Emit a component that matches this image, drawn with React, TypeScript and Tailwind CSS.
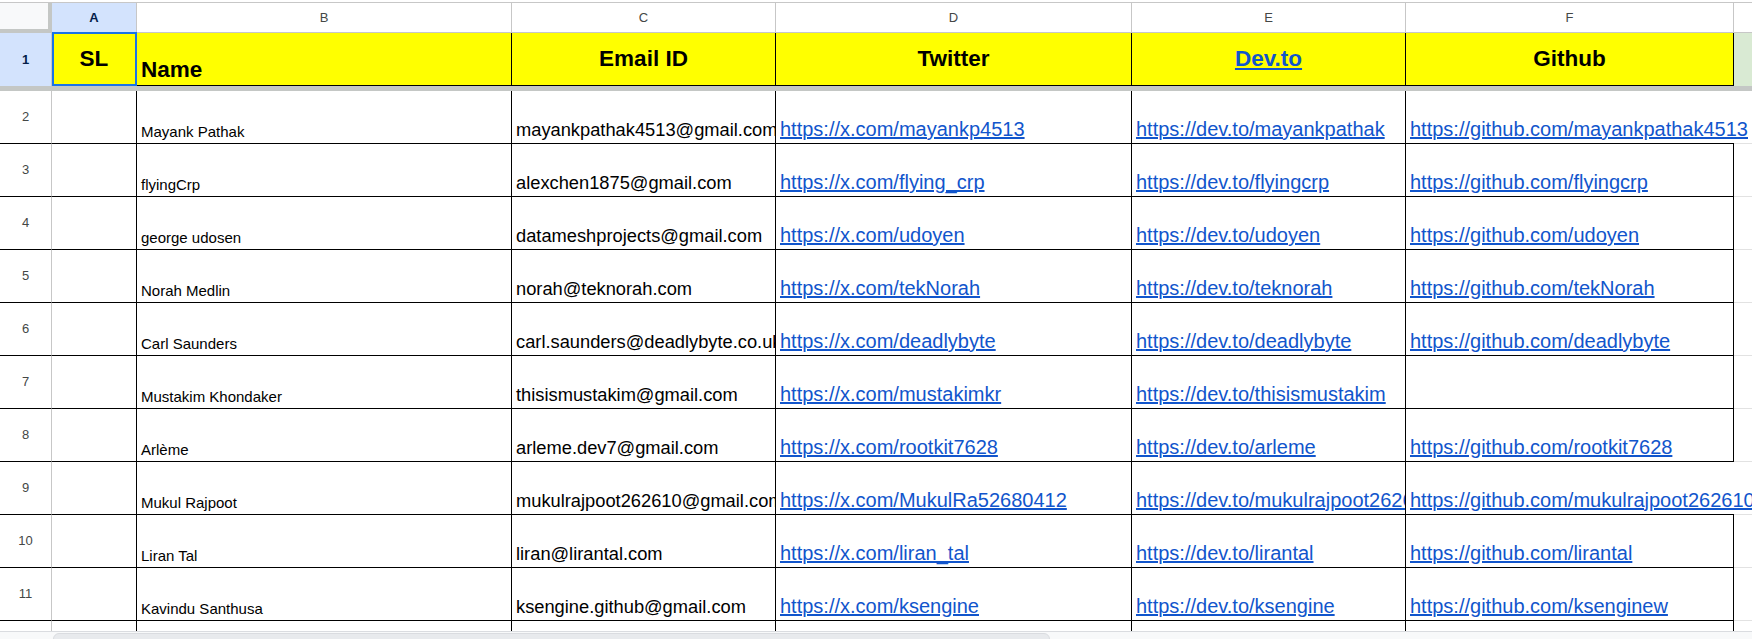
import React from "react";

const GRID =
  "grid grid-cols-[52px_85px_375px_264px_356px_274px_328px_1fr]";

type Row = [string, string, string, string, string];

const rows: Row[] = [
  ["Mayank Pathak", "mayankpathak4513@gmail.com", "https://x.com/mayankp4513", "https://dev.to/mayankpathak", "https://github.com/mayankpathak4513"],
  ["flyingCrp", "alexchen1875@gmail.com", "https://x.com/flying_crp", "https://dev.to/flyingcrp", "https://github.com/flyingcrp"],
  ["george udosen", "datameshprojects@gmail.com", "https://x.com/udoyen", "https://dev.to/udoyen", "https://github.com/udoyen"],
  ["Norah Medlin", "norah@teknorah.com", "https://x.com/tekNorah", "https://dev.to/teknorah", "https://github.com/tekNorah"],
  ["Carl Saunders", "carl.saunders@deadlybyte.co.uk", "https://x.com/deadlybyte", "https://dev.to/deadlybyte", "https://github.com/deadlybyte"],
  ["Mustakim Khondaker", "thisismustakim@gmail.com", "https://x.com/mustakimkr", "https://dev.to/thisismustakim", ""],
  ["Arlème", "arleme.dev7@gmail.com", "https://x.com/rootkit7628", "https://dev.to/arleme", "https://github.com/rootkit7628"],
  ["Mukul Rajpoot", "mukulrajpoot262610@gmail.com", "https://x.com/MukulRa52680412", "https://dev.to/mukulrajpoot262610", "https://github.com/mukulrajpoot262610"],
  ["Liran Tal", "liran@lirantal.com", "https://x.com/liran_tal", "https://dev.to/lirantal", "https://github.com/lirantal"],
  ["Kavindu Santhusa", "ksengine.github@gmail.com", "https://x.com/ksengine", "https://dev.to/ksengine", "https://github.com/ksenginew"],
];

const overflowF = new Set([0, 7]);

function Link({ href }: { href: string }) {
  return (
    <span className="text-[20px] leading-none whitespace-nowrap text-[#1155cc] underline">
      {href}
    </span>
  );
}

export default function App() {
  return (
    <div className="w-[1752px] h-[639px] overflow-hidden bg-white font-['Liberation_Sans',Arial,sans-serif] text-black flex flex-col">
      {/* top edge */}
      <div className="h-[2px] shrink-0 bg-white" />
      <div className="h-[1px] shrink-0 bg-[#c7c7c7]" />

      {/* column header row */}
      <div className={`${GRID} h-[30px] shrink-0 text-[13px] text-[#444746]`}>
        <div className="bg-[#f8f9fa] border-r-4 border-b-4 border-[#c4c7c5]" />
        <div className="bg-[#d3e3fd] border-r border-b border-[#c7c7c7] flex items-center justify-center font-bold text-[#041e49]">
          A
        </div>
        {["B", "C", "D", "E", "F"].map((l) => (
          <div key={l} className="border-r border-b border-[#c7c7c7] flex items-center justify-center">
            {l}
          </div>
        ))}
        <div className="border-b border-[#c7c7c7]" />
      </div>

      {/* row 1 (headers) */}
      <div className={`${GRID} h-[53px] shrink-0 text-[22.5px] font-bold`}>
        <div className="bg-[#d3e3fd] border-r border-[#c7c7c7] flex items-center justify-center text-[13px] text-[#041e49]">
          1
        </div>
        <div className="relative bg-[#ffff00] border-r border-b border-black flex items-center justify-center">
          <span className="leading-none">SL</span>
          <div className="absolute left-0 right-[-1px] top-[-1px] bottom-[-1px] border-2 border-[#1a73e8]" />
        </div>
        <div className="bg-[#ffff00] border-r border-b border-black flex items-end pl-[4px] pb-[4px]">
          <span className="leading-none">Name</span>
        </div>
        <div className="bg-[#ffff00] border-r border-b border-black flex items-center justify-center">
          <span className="leading-none">Email ID</span>
        </div>
        <div className="bg-[#ffff00] border-r border-b border-black flex items-center justify-center">
          <span className="leading-none">Twitter</span>
        </div>
        <div className="bg-[#ffff00] border-r border-b border-black flex items-center justify-center">
          <span className="leading-none text-[#1155cc] underline">Dev.to</span>
        </div>
        <div className="bg-[#ffff00] border-r border-b border-black flex items-center justify-center">
          <span className="leading-none">Github</span>
        </div>
        <div className="bg-[#d9ead3]" />
      </div>

      {/* frozen divider */}
      <div className="h-[5px] shrink-0 bg-[#c4c7c5]" />

      {/* data rows */}
      {rows.map((r, i) => (
        <div key={i} className={`${GRID} h-[53px] shrink-0`}>
          <div className="border-r border-r-[#c7c7c7] border-b border-b-black flex items-center justify-center text-[13px] text-[#444746]">
            {i + 2}
          </div>
          <div className="border-r border-b border-black" />
          <div className="border-r border-b border-black overflow-hidden flex items-end pl-[4px] pb-[4px]">
            <span className="text-[15px] leading-none whitespace-nowrap">{r[0]}</span>
          </div>
          <div className="border-r border-b border-black overflow-hidden flex items-end pl-[4px] pb-[4px]">
            <span className="text-[18.3px] leading-none whitespace-nowrap">{r[1]}</span>
          </div>
          <div className="border-r border-b border-black overflow-hidden flex items-end pl-[4px] pb-[4px]">
            <Link href={r[2]} />
          </div>
          <div className="border-r border-b border-black overflow-hidden flex items-end pl-[4px] pb-[4px]">
            <Link href={r[3]} />
          </div>
          {overflowF.has(i) ? (
            <div className="relative z-10 border-b border-black overflow-visible flex items-end pl-[4px] pb-[4px]">
              {r[4] && <Link href={r[4]} />}
            </div>
          ) : (
            <div className="border-r border-b border-black overflow-hidden flex items-end pl-[4px] pb-[4px]">
              {r[4] && <Link href={r[4]} />}
            </div>
          )}
          <div className="border-b border-[#e2e2e2]" />
        </div>
      ))}

      {/* partial row 12 */}
      <div className={`${GRID} h-[10px] shrink-0`}>
        <div className="border-r border-[#c7c7c7]" />
        <div className="border-r border-black" />
        <div className="border-r border-black" />
        <div className="border-r border-black" />
        <div className="border-r border-black" />
        <div className="border-r border-black" />
        <div className="border-r border-black" />
        <div />
      </div>

      {/* horizontal scrollbar */}
      <div className="h-[14px] shrink-0 border-t border-[#dadce0] bg-[#f8f9fa] flex">
        <div className="w-[53px] shrink-0" />
        <div className="w-[997px] h-[12px] mt-[1px] rounded-t-[6px] bg-[#e8eaed] border border-[#dadce0]" />
      </div>
    </div>
  );
}
